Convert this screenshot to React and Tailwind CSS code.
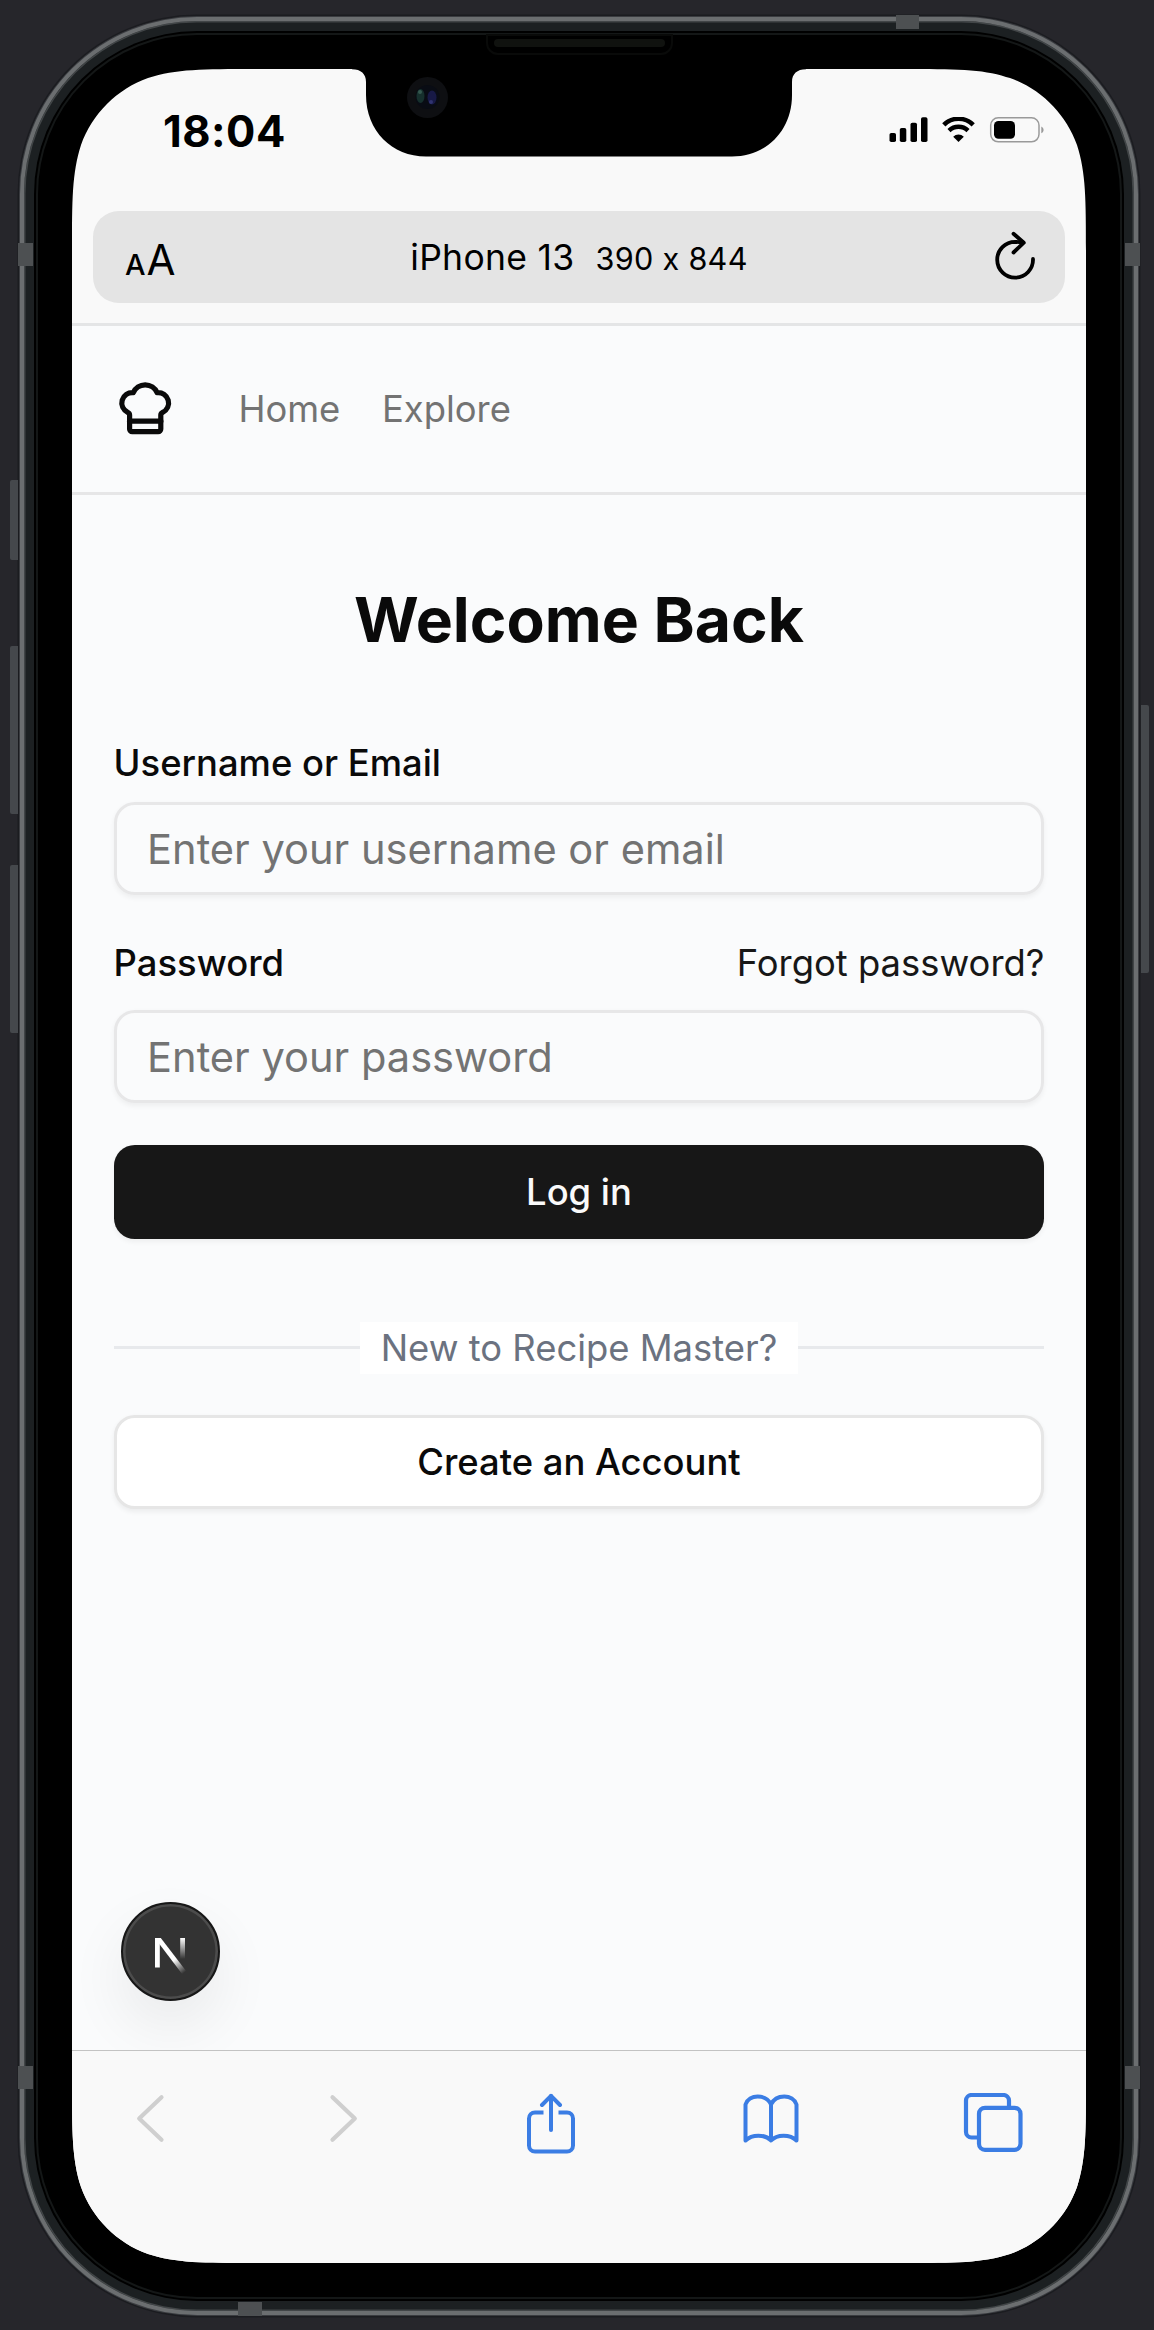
import React from "react";
import { ChefHat } from "lucide-react";

function StatusIcons() {
  return (
    <svg width="156" height="26" viewBox="0 0 156 26" fill="none">
      <rect x="0.5" y="16" width="6.5" height="9" rx="1.8" fill="#000" />
      <rect x="10.8" y="11" width="6.5" height="14" rx="1.8" fill="#000" />
      <rect x="21.5" y="5.8" width="6.5" height="19.2" rx="1.8" fill="#000" />
      <rect x="32" y="0.3" width="6.5" height="24.7" rx="1.8" fill="#000" />
      <path d="M54.8 7.8a21 21 0 0 1 29.4 0" stroke="#000" strokeWidth="4.6" />
      <path d="M60 13.6a13.6 13.6 0 0 1 19 0" stroke="#000" strokeWidth="4.4" />
      <path d="M69.500 25l-5.300-5.300a7.800 7.800 0 0 1 10.600 0z" fill="#000" />
      <rect x="101.700" y="0.800" width="48.300" height="24" rx="7.500" stroke="#9a9a9a" strokeWidth="1.500" />
      <rect x="105" y="4" width="21" height="17.700" rx="4.500" fill="#000" />
      <path d="M152.300 9.500v6.800c3-1.400 3-5.400 0-6.800z" fill="#9a9a9a" />
    </svg>
  );
}

function ReloadIcon() {
  return (
    <svg width="44" height="52" viewBox="0 0 44 52" fill="none" stroke="#000" strokeWidth="3.8" strokeLinecap="round" strokeLinejoin="round">
      <path d="M40 28A17.900 17.900 0 1 1 22.200 10.800L30 11.300" />
      <path d="M20.500 2.700L30.800 11.700L20.500 21.500" />
    </svg>
  );
}

function Toolbar() {
  return (
    <div className="flex h-[213px] items-start justify-between border-t-[1.3px] border-[#c3c3c3] bg-[#f9f9f9] pr-[61.500px] pl-[63px] pt-[42px]">
      <svg width="30" height="52" viewBox="0 0 30 52" fill="none" stroke="#cfcfcf" strokeWidth="4.200" strokeLinecap="round" strokeLinejoin="round">
        <path d="M26.500 4.200L4.200 25.500L26.500 46.800" />
      </svg>
      <svg width="30" height="52" viewBox="0 0 30 52" fill="none" stroke="#cfcfcf" strokeWidth="4.200" strokeLinecap="round" strokeLinejoin="round" className="ml-[2px]">
        <path d="M3.500 4.200L25.800 25.500L3.500 46.800" />
      </svg>
      <svg width="52" height="64" viewBox="0 0 52 64" fill="none" stroke="#3b7de4" strokeWidth="4" strokeLinejoin="round" className="ml-[4px]">
        <path d="M18.500 19.500H10a6 6 0 0 0-6 6v27a6 6 0 0 0 6 6h32a6 6 0 0 0 6-6v-27a6 6 0 0 0-6-6h-8.500" />
        <path d="M26 37V3" strokeLinecap="round" />
        <path d="M17 12L26 2.800L35 12" strokeLinecap="round" />
      </svg>
      <svg width="60" height="54" viewBox="0 0 60 54" fill="none" stroke="#3b7de4" strokeWidth="4" strokeLinecap="round" strokeLinejoin="round" className="ml-[2px]">
        <path d="M30 47.500c-6-6.500-19-6.500-25.500 0V11.500C8 0.800 25 0.800 30 11.500c5-10.700 22-10.700 25.500 0v36c-6.500-6.500-19.500-6.500-25.500 0zM30 11.500v36" />
      </svg>
      <svg width="62" height="62" viewBox="0 0 62 62" fill="none" stroke="#3b7de4" strokeWidth="4.200">
        <path d="M15 44.500h-6.500a5.500 5.500 0 0 1-5.500-5.500v-31.500a5.500 5.500 0 0 1 5.500-5.500h32a5.500 5.500 0 0 1 5.500 5.500v7" />
        <rect x="16" y="14.800" width="41.500" height="42" rx="6" />
      </svg>
    </div>
  );
}

function Field({ placeholder, type }) {
  return (
    <input
      type={type}
      placeholder={placeholder}
      className="block h-[93.6px] w-full rounded-[20.8px] border-[3px] border-[#e7e7e8] bg-transparent px-[30.5px] text-[41.6px] text-[#0a0a0a] shadow-[0_2.6px_5px_rgba(0,0,0,0.05)] outline-none placeholder:text-[#737373] placeholder:opacity-100"
    />
  );
}

function LoginPage() {
  return (
    <div className="flex flex-1 flex-col bg-[#fafbfc]">
      <header className="flex h-[169px] items-center border-b-[3px] border-[#e6e6e7] px-[41.6px]">
        <ChefHat size={62.4} color="#0a0a0a" strokeWidth={2} />
        <nav className="ml-[62.4px] flex gap-[41.6px] text-[36.4px] leading-[52px] text-[#737373]">
          <a>Home</a>
          <a>Explore</a>
        </nav>
      </header>
      <main className="flex flex-col px-[41.6px] pt-[83.2px]">
        <h1 className="text-center text-[62.4px] leading-[83.2px] font-bold text-[#0a0a0a]">Welcome Back</h1>
        <label className="mt-[84px] text-[36.4px] leading-[36.4px] font-medium text-[#0a0a0a]">Username or Email</label>
        <div className="mt-[20.500px]">
          <Field type="text" placeholder="Enter your username or email" />
        </div>
        <div className="mt-[41.6px] mb-[20.8px] flex items-center justify-between text-[36.4px] leading-[52px]">
          <label className="font-medium text-[#0a0a0a]">Password</label>
          <a className="text-[#171717]">Forgot password?</a>
        </div>
        <Field type="password" placeholder="Enter your password" />
        <button className="mt-[41.6px] h-[93.6px] rounded-[20.8px] bg-[#171717] text-[36.4px] leading-[52px] font-medium text-[#fafafa] shadow-[0_2.6px_5px_rgba(0,0,0,0.05)]">
          Log in
        </button>
        <div className="mt-[83.2px] flex items-center">
          <div className="h-[3px] flex-1 bg-[#e7e9ec]" />
          <span className="bg-white px-[20.8px] text-[36.4px] leading-[52px] text-[#6b7280]">New to Recipe Master?</span>
          <div className="h-[3px] flex-1 bg-[#e7e9ec]" />
        </div>
        <button className="mt-[41.6px] h-[93.6px] rounded-[20.8px] border-[3px] border-[#e6e6e6] bg-white text-[36.4px] leading-[52px] font-medium text-[#0a0a0a] shadow-[0_2.6px_5px_rgba(0,0,0,0.06)]">
          Create an Account
        </button>
      </main>
      <div className="mt-auto mb-[49px] ml-[49px] flex size-[99px] items-center justify-center rounded-full border-[2px] border-[#171717] bg-[#333] shadow-[inset_0_0_0_2.6px_#4c4c4c,0_26px_60px_rgba(0,0,0,0.07)]">
        <svg width="40" height="44" viewBox="0 0 40 44" fill="none">
          <defs>
            <linearGradient id="stem" x1="0" y1="8" x2="0" y2="29" gradientUnits="userSpaceOnUse">
              <stop stopColor="#fff" />
              <stop offset="1" stopColor="#fff" stopOpacity="0" />
            </linearGradient>
            <linearGradient id="diagonal" x1="24" y1="29" x2="34" y2="42" gradientUnits="userSpaceOnUse">
              <stop stopColor="#fff" />
              <stop offset="1" stopColor="#fff" stopOpacity="0" />
            </linearGradient>
          </defs>
          <rect x="4" y="8" width="4.800" height="29.500" fill="#fff" />
          <rect x="29.200" y="8" width="4.800" height="21" fill="url(#stem)" />
          <path d="M4 8h5.800L35.500 41.500L31.500 44.500L8 13.500z" fill="url(#diagonal)" />
        </svg>
      </div>
    </div>
  );
}

function Screen() {
  return (
    <div className="flex h-[2194px] w-[1014px] flex-col bg-[#f9f9f9] [clip-path:path('M183_0H831C882_0_910_0_934_8L938_9C969_20_994_45_1005_76C1014_104_1014_131_1014_183V2011C1014_2063_1014_2090_1005_2118C994_2149_969_2174_938_2185C910_2194_883_2194_831_2194H183C131_2194_104_2194_76_2185C45_2174_20_2149_9_2118C0_2090_0_2063_0_2011V183C0_131_0_104_9_76C20_45_45_20_76_9C104_0_131_0_183_0Z')]">
      <div className="flex h-[142px] items-start justify-between pr-[41.500px] pl-[91px]">
        <span className="mt-[36px] text-[43.500px] leading-[52px] font-bold tracking-[0.5px] text-black">18:04</span>
        <div className="mt-[48px]">
          <StatusIcons />
        </div>
      </div>
      <div className="mx-[21px] flex h-[92px] items-center justify-between rounded-[26px] bg-[#e4e4e4] pr-[28px] pl-[32px] text-black">
        <div className="flex w-[62px] items-baseline gap-[1px] pt-[10px] leading-[52px]">
          <span className="text-[29px] font-medium">A</span>
          <span className="text-[42px]">A</span>
        </div>
        <div className="flex items-baseline gap-[21px] pt-[3px] leading-[52px] [font-feature-settings:'calt'_0]">
          <span className="text-[35.500px] tracking-[0.3px]">iPhone 13</span>
          <span className="text-[30.600px] tracking-[0.3px]">390 x 844</span>
        </div>
        <div className="flex w-[66px] justify-end">
          <ReloadIcon />
        </div>
      </div>
      <div className="mt-[20px] h-[2.600px] shrink-0 bg-[#e4e5e6]" />
      <LoginPage />
      <Toolbar />
    </div>
  );
}

function Notch() {
  return (
    <svg width="454" height="88" viewBox="0 0 454 88" className="absolute left-[352px] top-[69px]">
      <path d="M0 0V0.300C9 0.300 14 5 14 13V26C14 62 40 87.500 74 87.500H380C414 87.500 440 62 440 26V13C440 5 445 0.300 454 0.300V0Z" fill="#000" />
      <circle cx="75.500" cy="28.500" r="20.500" fill="#0e0f12" />
      <circle cx="75.500" cy="28" r="12" fill="#090c14" />
      <ellipse cx="68.500" cy="27" rx="4" ry="7" fill="#16302d" />
      <ellipse cx="80" cy="28.500" rx="4.500" ry="7" fill="#171946" />
      <circle cx="68" cy="23" r="2" fill="#34584f" />
      <circle cx="79" cy="33" r="2" fill="#303370" />
    </svg>
  );
}

export default function App() {
  return (
    <div className="relative h-[2330px] w-[1154px] overflow-hidden bg-[#26262b] pt-[17px] pl-[20px] font-['Inter',sans-serif]">
      <div className="absolute left-[10px] top-[480px] h-[80px] w-[8px] rounded-l-[2px] bg-[#45484c]" />
      <div className="absolute left-[10px] top-[646px] h-[168px] w-[8px] rounded-l-[2px] bg-[#45484c]" />
      <div className="absolute left-[10px] top-[865px] h-[168px] w-[8px] rounded-l-[2px] bg-[#45484c]" />
      <div className="absolute left-[1141px] top-[705px] h-[268px] w-[8px] rounded-r-[2px] bg-[#45484c]" />
      <div className="h-[2298px] w-[1118px] rounded-[177px] border-[4px] border-[#6b6e70] bg-[#1c2022] p-[10px] shadow-[0_0_0_1px_#3a3c40,0_0_0_2.5px_#1b1c20,inset_0_0_0_1.5px_#414547]">
        <div className="h-full w-full rounded-[163px] bg-black p-[2px]">
          <div className="flex h-full w-full justify-center rounded-[161px] border-[2px] border-[#141717] bg-black pt-[34px]">
            <Screen />
          </div>
        </div>
      </div>
      <div className="absolute left-[18px] top-[243px] h-[23px] w-[15px] bg-[#4d5052]" />
      <div className="absolute left-[1125px] top-[243px] h-[23px] w-[15px] bg-[#4d5052]" />
      <div className="absolute left-[18px] top-[2066px] h-[23px] w-[15px] bg-[#4d5052]" />
      <div className="absolute left-[1125px] top-[2066px] h-[23px] w-[15px] bg-[#4d5052]" />
      <div className="absolute left-[896px] top-[15px] h-[14px] w-[23px] bg-[#4d5052]" />
      <div className="absolute left-[238px] top-[2302px] h-[14px] w-[24px] bg-[#4d5052]" />
      <div className="absolute left-[486px] top-[34px] h-[21px] w-[187px] rounded-b-[12px] border-[2px] border-[#090a09] bg-black px-[6px] pt-[3px]">
        <div className="h-[8px] rounded-[4px] bg-[#10120f]" />
      </div>
      <Notch />
    </div>
  );
}
